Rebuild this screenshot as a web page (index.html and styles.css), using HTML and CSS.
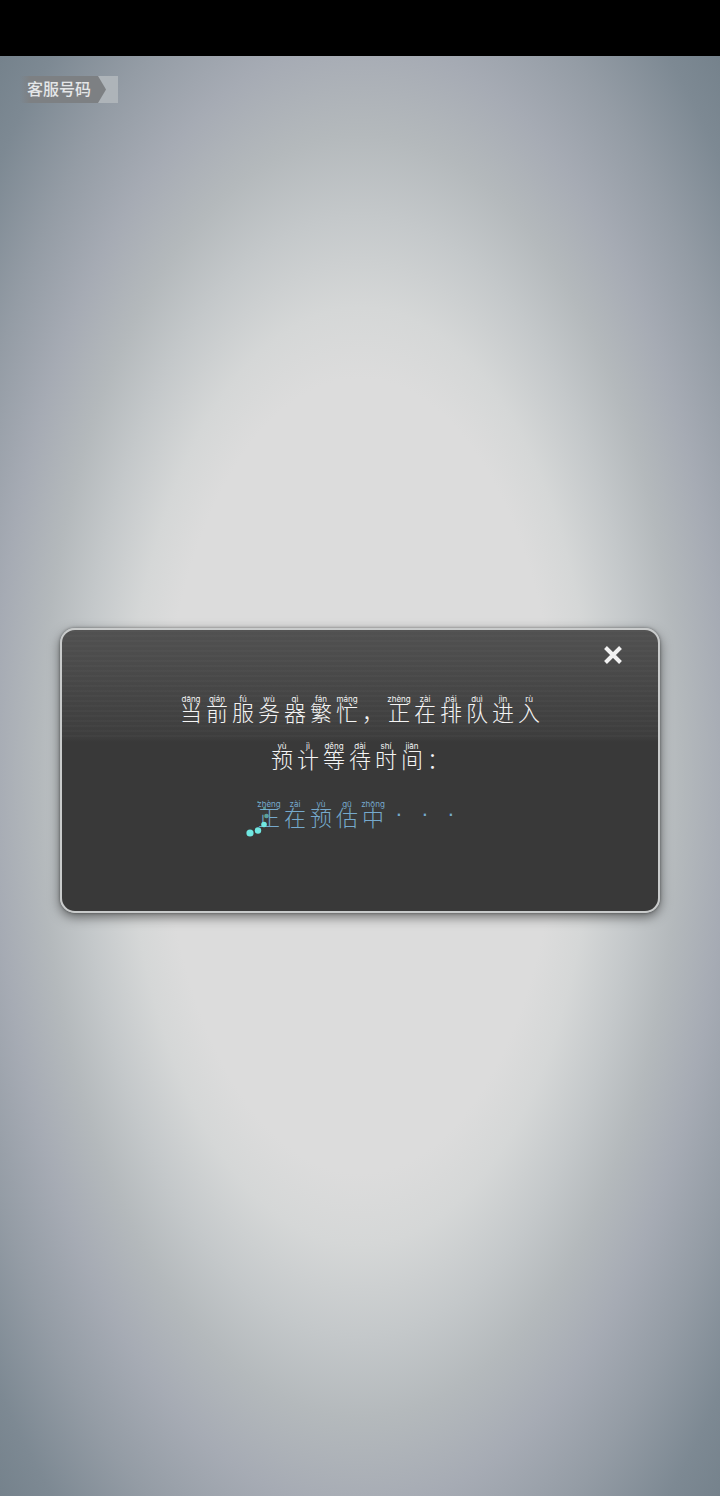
FILE: index.html
```html
<!DOCTYPE html>
<html lang="zh-CN">
<head>
<meta charset="utf-8">
<meta name="viewport" content="width=device-width, initial-scale=1">
<title>排队进入</title>
<link rel="stylesheet" href="styles.css">
</head>
<body>
<div class="status-bar"></div>
<main class="stage">
  <header class="top">
    <button class="service" type="button"><span class="service-label">客服号码</span></button>
  </header>
  <section class="dialog" role="dialog" aria-label="排队进入">
    <button class="close" type="button" aria-label="关闭">
      <svg viewBox="0 0 22 22" width="22" height="22"><path d="M3.500 3.500 18.500 18.500M18.500 3.500 3.500 18.500"/></svg>
    </button>
    <p class="line"><ruby>当<rt>dāng</rt></ruby><ruby>前<rt>qián</rt></ruby><ruby>服<rt>fú</rt></ruby><ruby>务<rt>wù</rt></ruby><ruby>器<rt>qì</rt></ruby><ruby>繁<rt>fán</rt></ruby><ruby>忙<rt>máng</rt></ruby><span class="mark">，</span><ruby>正<rt>zhèng</rt></ruby><ruby>在<rt>zài</rt></ruby><ruby>排<rt>pái</rt></ruby><ruby>队<rt>duì</rt></ruby><ruby>进<rt>jìn</rt></ruby><ruby>入<rt>rù</rt></ruby></p>
    <p class="line"><ruby>预<rt>yù</rt></ruby><ruby>计<rt>jì</rt></ruby><ruby>等<rt>děng</rt></ruby><ruby>待<rt>dài</rt></ruby><ruby>时<rt>shí</rt></ruby><ruby>间<rt>jiān</rt></ruby><span class="mark">：</span></p>
    <p class="line estimate"><ruby>正<rt>zhèng</rt></ruby><ruby>在<rt>zài</rt></ruby><ruby>预<rt>yù</rt></ruby><ruby>估<rt>gū</rt></ruby><ruby>中<rt>zhōng</rt></ruby><span class="mark dot">·</span><span class="mark dot">·</span><span class="mark dot">·</span>
      <svg class="spinner" viewBox="0 0 30 38" width="30" height="38" aria-hidden="true"><circle cx="5" cy="33" r="3.6"/><circle cx="13" cy="30.500" r="3.200"/><circle cx="19" cy="24.500" r="2.800"/><circle cx="21.500" cy="16" r="2.300" opacity=".6"/><circle cx="19.500" cy="8" r="1.600" opacity=".5"/><circle cx="13" cy="2" r="1" opacity=".4"/></svg>
    </p>
  </section>
</main>
</body>
</html>
```
FILE: styles.css
```css
* { box-sizing: border-box; }
body {
  margin: 0;
  min-height: 100vh;
  display: flex;
  flex-direction: column;
  font-family: "Liberation Sans", "Noto Sans CJK SC", sans-serif;
}
.status-bar { height: 56px; background: #000; }
.stage {
  flex: 1;
  display: grid;
  grid-template-rows: 1fr auto 1fr;
  padding-bottom: 12px;
  background: radial-gradient(ellipse farthest-corner at center, #dcdcdc 0%, #dcdcdc 39%, #d5d7d7 46%, #c4c8ca 55%, #b4b9bc 63%, #a6abb4 72%, #949ca5 82%, #7d8993 93%, #75828c 100%);
}
.top { padding: 20px; }
.service {
  display: flex;
  padding: 0 12px 0 0;
  border: 0;
  color: #e4e6e8;
  background: linear-gradient(90deg, transparent 76px, #aeb4b9 76px);
}
.service-label {
  padding: 0 15px 3px 7px;
  font: 500 16px/24px "Noto Sans CJK SC", sans-serif;
  background: linear-gradient(90deg, transparent, #7d8083 10px);
  clip-path: polygon(0 0, calc(100% - 8px) 0, 100% 50%, calc(100% - 8px) 100%, 0 100%);
}
.dialog {
  position: relative;
  margin: 0 60px;
  padding: 65px 24px 82px;
  border: 2px solid #c9cbcb;
  border-radius: 15px;
  color: #f4f4f4;
  background:
    repeating-linear-gradient(rgba(255, 255, 255, .02) 0 2px, transparent 2px 5px) top / 100% 108px no-repeat,
    linear-gradient(#515151, #3d3d3d 108px, #393939 112px);
  box-shadow: 0 4px 12px rgba(0, 0, 0, .5), 0 0 3px rgba(0, 0, 0, .4);
}
.close {
  position: absolute;
  top: 14px;
  right: 34px;
  display: flex;
  padding: 0;
  border: 0;
  background: none;
}
.close path { stroke: #f2f2f2; stroke-width: 4; fill: none; }
.line {
  position: relative;
  display: flex;
  justify-content: center;
  align-items: flex-end;
  margin: 0 auto 18px;
  width: max-content;
  font-size: 22px;
  font-weight: 300;
  line-height: 20px;
}
ruby {
  display: flex;
  flex-direction: column-reverse;
  align-items: center;
  width: 26px;
}
rt {
  display: block;
  font: 8px/9px Inter, sans-serif;
  white-space: nowrap;
}
.mark { width: 26px; text-align: center; }
.dot { padding-bottom: 5px; }
.estimate { margin: 29px auto 0; color: #76a9cc; }
.spinner {
  position: absolute;
  left: -11px;
  bottom: -9px;
  fill: #70e7e1;
}
```
